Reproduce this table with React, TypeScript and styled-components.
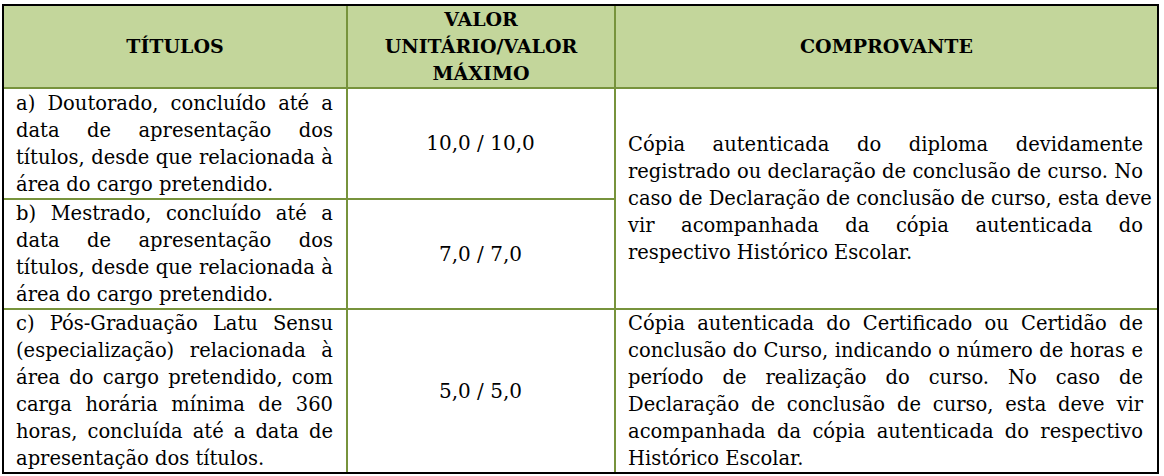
import React from "react";
import styled, { createGlobalStyle } from "styled-components";

const GlobalStyle = createGlobalStyle`
  html, body { margin: 0; padding: 0; background: #ffffff; }
  body { font-family: "DejaVu Serif", "Liberation Serif", serif; color: #000; }
`;

const Page = styled.div`
  padding: 4px 0 0 2px;
`;

const Table = styled.table`
  border-collapse: separate;
  border-spacing: 0;
  table-layout: fixed;
  width: 1157px;
  border: 2px solid #000;
  font-family: "DejaVu Serif", "Liberation Serif", serif;
  font-size: 19.5px;
  line-height: 27px;
`;

const HeadRow = styled.tr`
  height: 83px;
`;

const BodyRow = styled.tr<{ $h: number }>`
  height: ${(p) => p.$h}px;
`;

const HeadCell = styled.th<{ $last?: boolean }>`
  box-sizing: border-box;
  background: #c3d69b;
  font-size: 19px;
  font-weight: bold;
  text-align: center;
  vertical-align: middle;
  padding: 0 6px;
  border-bottom: 2px solid #77933c;
  border-right: ${(p) => (p.$last ? "none" : "2px solid #77933c")};
`;

const Cell = styled.td<{ $last?: boolean; $bottom?: boolean; $align?: "center" | "left"; $pl?: number; $pr?: number }>`
  box-sizing: border-box;
  vertical-align: middle;
  text-align: ${(p) => p.$align ?? "left"};
  padding: 0 ${(p) => p.$pr ?? 13}px 0 ${(p) => p.$pl ?? 12}px;
  border-right: ${(p) => (p.$last ? "none" : "2px solid #77933c")};
  border-bottom: ${(p) => (p.$bottom ? "none" : "2px solid #77933c")};
  overflow: hidden;
`;

const Value = styled.span`
  font-size: 20px;
`;

const Line = styled.span<{ $last?: boolean }>`
  display: block;
  white-space: nowrap;
  text-align: ${(p) => (p.$last ? "left" : "justify")};
  text-align-last: ${(p) => (p.$last ? "left" : "justify")};
`;

const Para: React.FC<{ lines: string[] }> = ({ lines }) => (
  <>
    {lines.map((l, i) => (
      <Line key={i} $last={i === lines.length - 1}>
        {l}
      </Line>
    ))}
  </>
);

const rowA = [
  "a) Doutorado, concluído até a",
  "data de apresentação dos",
  "títulos, desde que relacionada à",
  "área do cargo pretendido.",
];
const rowB = [
  "b) Mestrado, concluído até a",
  "data de apresentação dos",
  "títulos, desde que relacionada à",
  "área do cargo pretendido.",
];
const rowC = [
  "c) Pós-Graduação Latu Sensu",
  "(especialização) relacionada à",
  "área do cargo pretendido, com",
  "carga horária mínima de 360",
  "horas, concluída até a data de",
  "apresentação dos títulos.",
];
const compAB = [
  "Cópia autenticada do diploma devidamente",
  "registrado ou declaração de conclusão de curso. No",
  "caso de Declaração de conclusão de curso, esta deve",
  "vir acompanhada da cópia autenticada do",
  "respectivo Histórico Escolar.",
];
const compC = [
  "Cópia autenticada do Certificado ou Certidão de",
  "conclusão do Curso, indicando o número de horas e",
  "período de realização do curso. No caso de",
  "Declaração de conclusão de curso, esta deve vir",
  "acompanhada da cópia autenticada do respectivo",
  "Histórico Escolar.",
];

export default function App() {
  return (
    <>
      <GlobalStyle />
      <Page>
        <Table>
          <colgroup>
            <col style={{ width: 344 }} />
            <col style={{ width: 268 }} />
            <col style={{ width: 541 }} />
          </colgroup>
          <thead>
            <HeadRow>
              <HeadCell>TÍTULOS</HeadCell>
              <HeadCell>
                VALOR
                <br />
                UNITÁRIO/VALOR
                <br />
                MÁXIMO
              </HeadCell>
              <HeadCell $last>COMPROVANTE</HeadCell>
            </HeadRow>
          </thead>
          <tbody>
            <BodyRow $h={111}>
              <Cell>
                <Para lines={rowA} />
              </Cell>
              <Cell $align="center">
                <Value>10,0 / 10,0</Value>
              </Cell>
              <Cell $last rowSpan={2} $pl={12} $pr={14}>
                <Para lines={compAB} />
              </Cell>
            </BodyRow>
            <BodyRow $h={110}>
              <Cell>
                <Para lines={rowB} />
              </Cell>
              <Cell $align="center">
                <Value>7,0 / 7,0</Value>
              </Cell>
            </BodyRow>
            <BodyRow $h={162}>
              <Cell $bottom>
                <Para lines={rowC} />
              </Cell>
              <Cell $bottom $align="center">
                <Value>5,0 / 5,0</Value>
              </Cell>
              <Cell $bottom $last $pl={12} $pr={14}>
                <Para lines={compC} />
              </Cell>
            </BodyRow>
          </tbody>
        </Table>
      </Page>
    </>
  );
}
